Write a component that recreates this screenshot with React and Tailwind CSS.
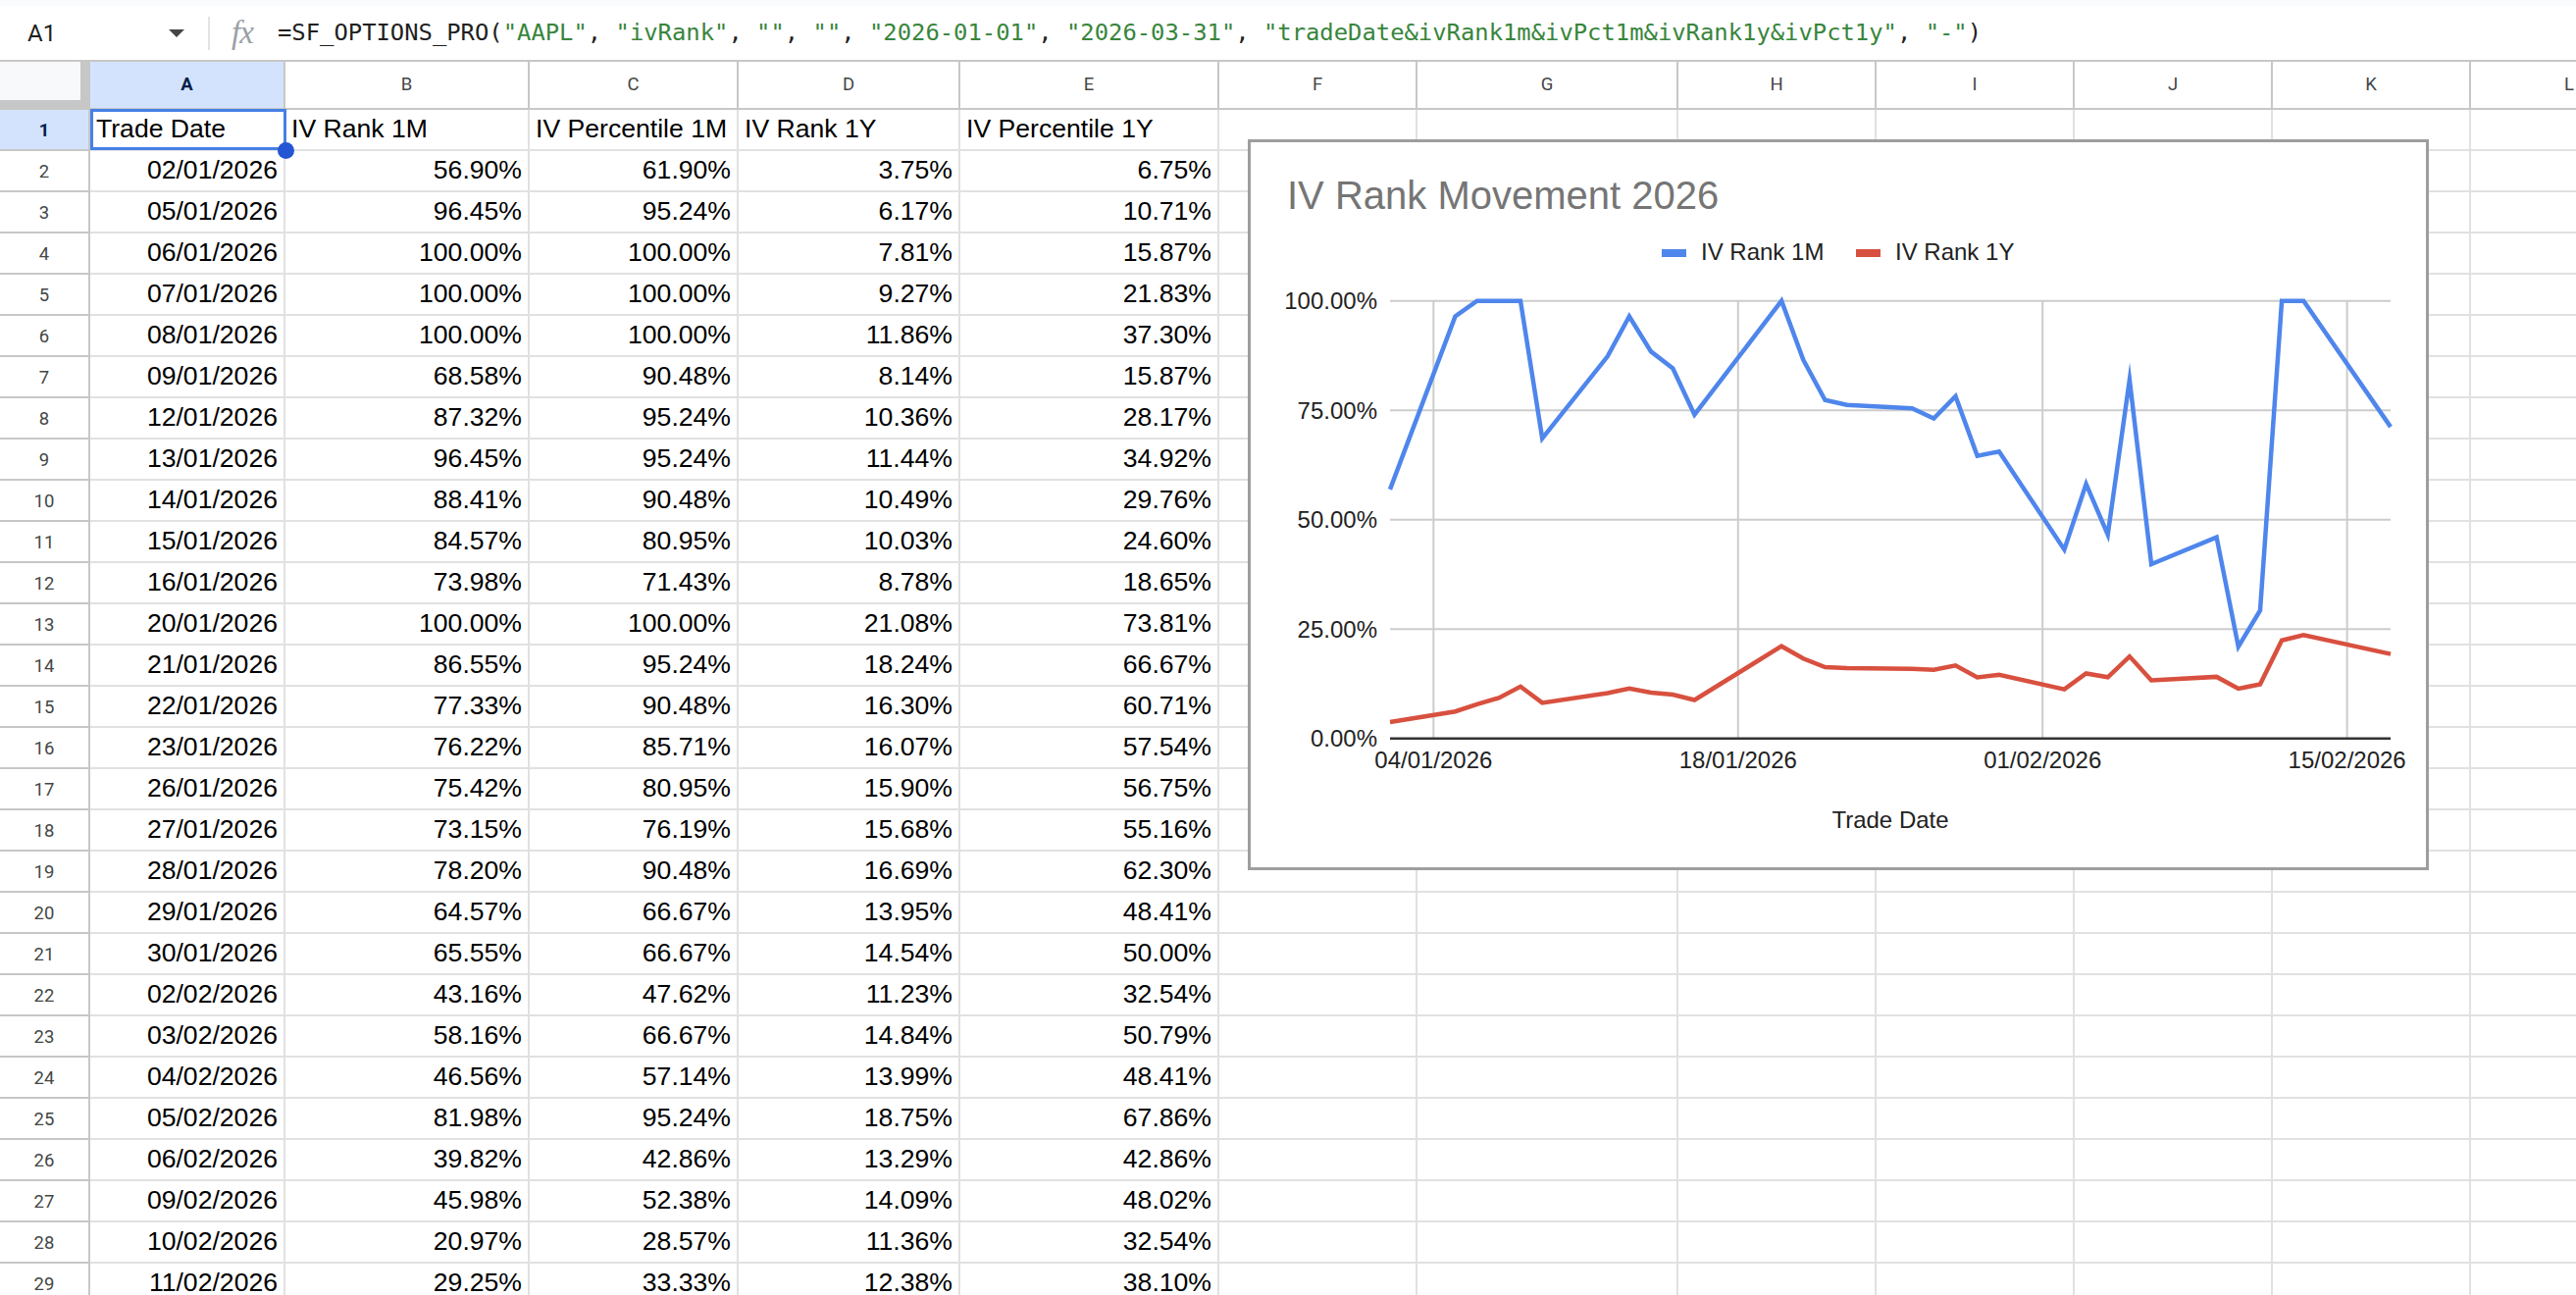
import React from 'react';

const rows = [
  ['02/01/2026', '56.90%', '61.90%', '3.75%', '6.75%'],
  ['05/01/2026', '96.45%', '95.24%', '6.17%', '10.71%'],
  ['06/01/2026', '100.00%', '100.00%', '7.81%', '15.87%'],
  ['07/01/2026', '100.00%', '100.00%', '9.27%', '21.83%'],
  ['08/01/2026', '100.00%', '100.00%', '11.86%', '37.30%'],
  ['09/01/2026', '68.58%', '90.48%', '8.14%', '15.87%'],
  ['12/01/2026', '87.32%', '95.24%', '10.36%', '28.17%'],
  ['13/01/2026', '96.45%', '95.24%', '11.44%', '34.92%'],
  ['14/01/2026', '88.41%', '90.48%', '10.49%', '29.76%'],
  ['15/01/2026', '84.57%', '80.95%', '10.03%', '24.60%'],
  ['16/01/2026', '73.98%', '71.43%', '8.78%', '18.65%'],
  ['20/01/2026', '100.00%', '100.00%', '21.08%', '73.81%'],
  ['21/01/2026', '86.55%', '95.24%', '18.24%', '66.67%'],
  ['22/01/2026', '77.33%', '90.48%', '16.30%', '60.71%'],
  ['23/01/2026', '76.22%', '85.71%', '16.07%', '57.54%'],
  ['26/01/2026', '75.42%', '80.95%', '15.90%', '56.75%'],
  ['27/01/2026', '73.15%', '76.19%', '15.68%', '55.16%'],
  ['28/01/2026', '78.20%', '90.48%', '16.69%', '62.30%'],
  ['29/01/2026', '64.57%', '66.67%', '13.95%', '48.41%'],
  ['30/01/2026', '65.55%', '66.67%', '14.54%', '50.00%'],
  ['02/02/2026', '43.16%', '47.62%', '11.23%', '32.54%'],
  ['03/02/2026', '58.16%', '66.67%', '14.84%', '50.79%'],
  ['04/02/2026', '46.56%', '57.14%', '13.99%', '48.41%'],
  ['05/02/2026', '81.98%', '95.24%', '18.75%', '67.86%'],
  ['06/02/2026', '39.82%', '42.86%', '13.29%', '42.86%'],
  ['09/02/2026', '45.98%', '52.38%', '14.09%', '48.02%'],
  ['10/02/2026', '20.97%', '28.57%', '11.36%', '32.54%'],
  ['11/02/2026', '29.25%', '33.33%', '12.38%', '38.10%'],
];

const headers = ['Trade Date', 'IV Rank 1M', 'IV Percentile 1M', 'IV Rank 1Y', 'IV Percentile 1Y'];

const W = [
  'w-[199px]', 'w-[249px]', 'w-[213px]', 'w-[226px]', 'w-[264px]', 'w-[202px]',
  'w-[266px]', 'w-[202px]', 'w-[202px]', 'w-[202px]', 'w-[202px]', 'w-[202px]',
];
const LETTERS = ['A', 'B', 'C', 'D', 'E', 'F', 'G', 'H', 'I', 'J', 'K', 'L'];

// [day offset from 02/01, IV Rank 1M, IV Rank 1Y]
const series = [
  [0, 56.9, 3.75], [3, 96.45, 6.17], [4, 100, 7.81], [5, 100, 9.27], [6, 100, 11.86],
  [7, 68.58, 8.14], [10, 87.32, 10.36], [11, 96.45, 11.44], [12, 88.41, 10.49],
  [13, 84.57, 10.03], [14, 73.98, 8.78], [18, 100, 21.08], [19, 86.55, 18.24],
  [20, 77.33, 16.3], [21, 76.22, 16.07], [24, 75.42, 15.9], [25, 73.15, 15.68],
  [26, 78.2, 16.69], [27, 64.57, 13.95], [28, 65.55, 14.54], [31, 43.16, 11.23],
  [32, 58.16, 14.84], [33, 46.56, 13.99], [34, 81.98, 18.75], [35, 39.82, 13.29],
  [38, 45.98, 14.09], [39, 20.97, 11.36], [40, 29.25, 12.38], [41, 100, 22.4],
  [42, 100, 23.6], [46, 71.2, 19.3],
];

const X0 = 1417;
const X1 = 2437;
const Y0 = 752.7;
const Y100 = 306.7;
const xd = (d) => X0 + (d * (X1 - X0)) / 46;
const yv = (v) => Y0 - (v * (Y0 - Y100)) / 100;
const linePath = (i) =>
  series.map((p, k) => `${k ? 'L' : 'M'}${xd(p[0]).toFixed(1)} ${yv(p[i]).toFixed(1)}`).join(' ');

const G = ({ children }) => <span className="text-[#38853c]">{children}</span>;

function FormulaBar() {
  return (
    <div className="flex flex-col">
      <div className="h-[6px] bg-[#f9fbfd]" />
      <div className="h-[57px] border-b-2 border-[#c7c7c7] bg-white flex items-center">
        <div className="w-[212px] flex items-center pl-[28px] pr-[24px]">
          <span className="flex-1 text-[24px] text-[#1f1f1f] font-['Roboto',sans-serif]">A1</span>
          <svg width="16" height="8" viewBox="0 0 16 8">
            <path d="M0 0 L16 0 L8 8 Z" fill="#444746" />
          </svg>
        </div>
        <div className="w-[2px] h-[34px] bg-[#e3e3e3]" />
        <span className="ml-[22px] w-[30px] text-[33px] leading-none italic text-[#9aa0a6] font-['Liberation_Serif',serif] tracking-[-1px]">
          fx
        </span>
        <div className="ml-[17px] font-['DejaVu_Sans_Mono',monospace] text-[23.85px] text-[#1f1f1f] whitespace-pre">
          =SF_OPTIONS_PRO(<G>{'"AAPL"'}</G>, <G>{'"ivRank"'}</G>, <G>{'""'}</G>, <G>{'""'}</G>,{' '}
          <G>{'"2026-01-01"'}</G>, <G>{'"2026-03-31"'}</G>,{' '}
          <G>{'"tradeDate&ivRank1m&ivPct1m&ivRank1y&ivPct1y"'}</G>, <G>{'"-"'}</G>)
        </div>
      </div>
    </div>
  );
}

function HeaderRow() {
  return (
    <div className="flex h-[49px]">
      <div className="w-[92px] h-[49px] shrink-0 bg-[#c7c7c7]">
        <div className="w-[82px] h-[39px] bg-[#f8f9fa]" />
      </div>
      {LETTERS.map((l, i) => (
        <div
          key={l}
          className={`${W[i]} shrink-0 border-r-2 border-b-2 border-[#c7c7c7] flex items-center justify-center text-[18.5px] font-['Roboto',sans-serif] ${
            i === 0 ? 'bg-[#d3e3fd] text-[#041e49] font-bold' : 'bg-white text-[#444746]'
          }`}
        >
          {l}
        </div>
      ))}
    </div>
  );
}

function RowHeader({ n, selected }) {
  return (
    <div
      className={`w-[92px] shrink-0 border-r-2 border-b-2 border-[#c7c7c7] flex items-center justify-center pt-[3px] text-[18.5px] font-['Roboto',sans-serif] ${
        selected ? 'bg-[#d3e3fd] text-[#041e49] font-bold' : 'bg-white text-[#444746]'
      }`}
    >
      {n}
    </div>
  );
}

function Row({ n, values, isHeader }) {
  return (
    <div className="flex h-[42px]">
      <RowHeader n={n} selected={isHeader} />
      {W.map((w, i) => {
        const v = values[i];
        return (
          <div
            key={i}
            className={`${w} shrink-0 border-r-2 border-b-2 border-[#e1e1e1] relative flex items-end pb-[0px] px-[6px] whitespace-nowrap text-[26.6px] text-black ${
              isHeader ? 'justify-start' : 'justify-end'
            }`}
          >
            {v}
            {isHeader && i === 0 && (
              <>
                <div className="absolute left-0 top-[-1px] w-[200px] h-[42px] border-[3px] border-[#4680e6] z-10" />
                <div className="absolute left-[191px] top-[33px] w-[17px] h-[17px] rounded-full bg-[#2456d3] z-10" />
              </>
            )}
          </div>
        );
      })}
    </div>
  );
}

function Chart() {
  const yTicks = [
    [100, '100.00%'],
    [75, '75.00%'],
    [50, '50.00%'],
    [25, '25.00%'],
    [0, '0.00%'],
  ];
  const xTicks = [
    [2, '04/01/2026'],
    [16, '18/01/2026'],
    [30, '01/02/2026'],
    [44, '15/02/2026'],
  ];
  const font = 'Liberation Sans, Arial, sans-serif';
  return (
    <div className="absolute left-[1272px] top-[142px] w-[1204px] h-[745px] border-[3px] border-[#9e9e9e] bg-white z-20">
      <svg className="block" width="1198" height="739" viewBox="1275 145 1198 739" fontFamily={font}>
        <text x="1312" y="212.5" fontSize="40" fill="#757575">
          IV Rank Movement 2026
        </text>
        <rect x="1694" y="254" width="25" height="8" fill="#4f86ec" />
        <text x="1734" y="265" fontSize="24" fill="#222">
          IV Rank 1M
        </text>
        <rect x="1892" y="254" width="25" height="8" fill="#d8503f" />
        <text x="1932" y="265" fontSize="24" fill="#222">
          IV Rank 1Y
        </text>

        {yTicks.map(([v, label]) => (
          <g key={label}>
            {v !== 0 && <line x1={X0} x2={X1} y1={yv(v)} y2={yv(v)} stroke="#cccccc" strokeWidth="2" />}
            <text x="1404" y={yv(v) + 8.5} fontSize="24" fill="#222" textAnchor="end">
              {label}
            </text>
          </g>
        ))}
        {xTicks.map(([d, label]) => (
          <g key={label}>
            <line x1={xd(d)} x2={xd(d)} y1={Y100} y2={Y0} stroke="#cccccc" strokeWidth="2" />
            <text x={xd(d)} y="783" fontSize="24" fill="#222" textAnchor="middle">
              {label}
            </text>
          </g>
        ))}
        <line x1={X0} x2={X1} y1={Y0} y2={Y0} stroke="#333333" strokeWidth="2.5" />
        <path d={linePath(1)} fill="none" stroke="#4f86ec" strokeWidth="4.5" strokeLinejoin="miter" strokeMiterlimit="12" />
        <path d={linePath(2)} fill="none" stroke="#d8503f" strokeWidth="4.5" strokeLinejoin="miter" strokeMiterlimit="12" />
        <text x={(X0 + X1) / 2} y="844" fontSize="24" fill="#222" textAnchor="middle">
          Trade Date
        </text>
      </svg>
    </div>
  );
}

export default function App() {
  return (
    <div className="relative w-[2626px] h-[1320px] overflow-hidden bg-white font-['Liberation_Sans',Arial,sans-serif]">
      <FormulaBar />
      <HeaderRow />
      <Row n={1} values={headers} isHeader />
      {rows.map((r, i) => (
        <Row key={i} n={i + 2} values={r} />
      ))}
      <Chart />
    </div>
  );
}
